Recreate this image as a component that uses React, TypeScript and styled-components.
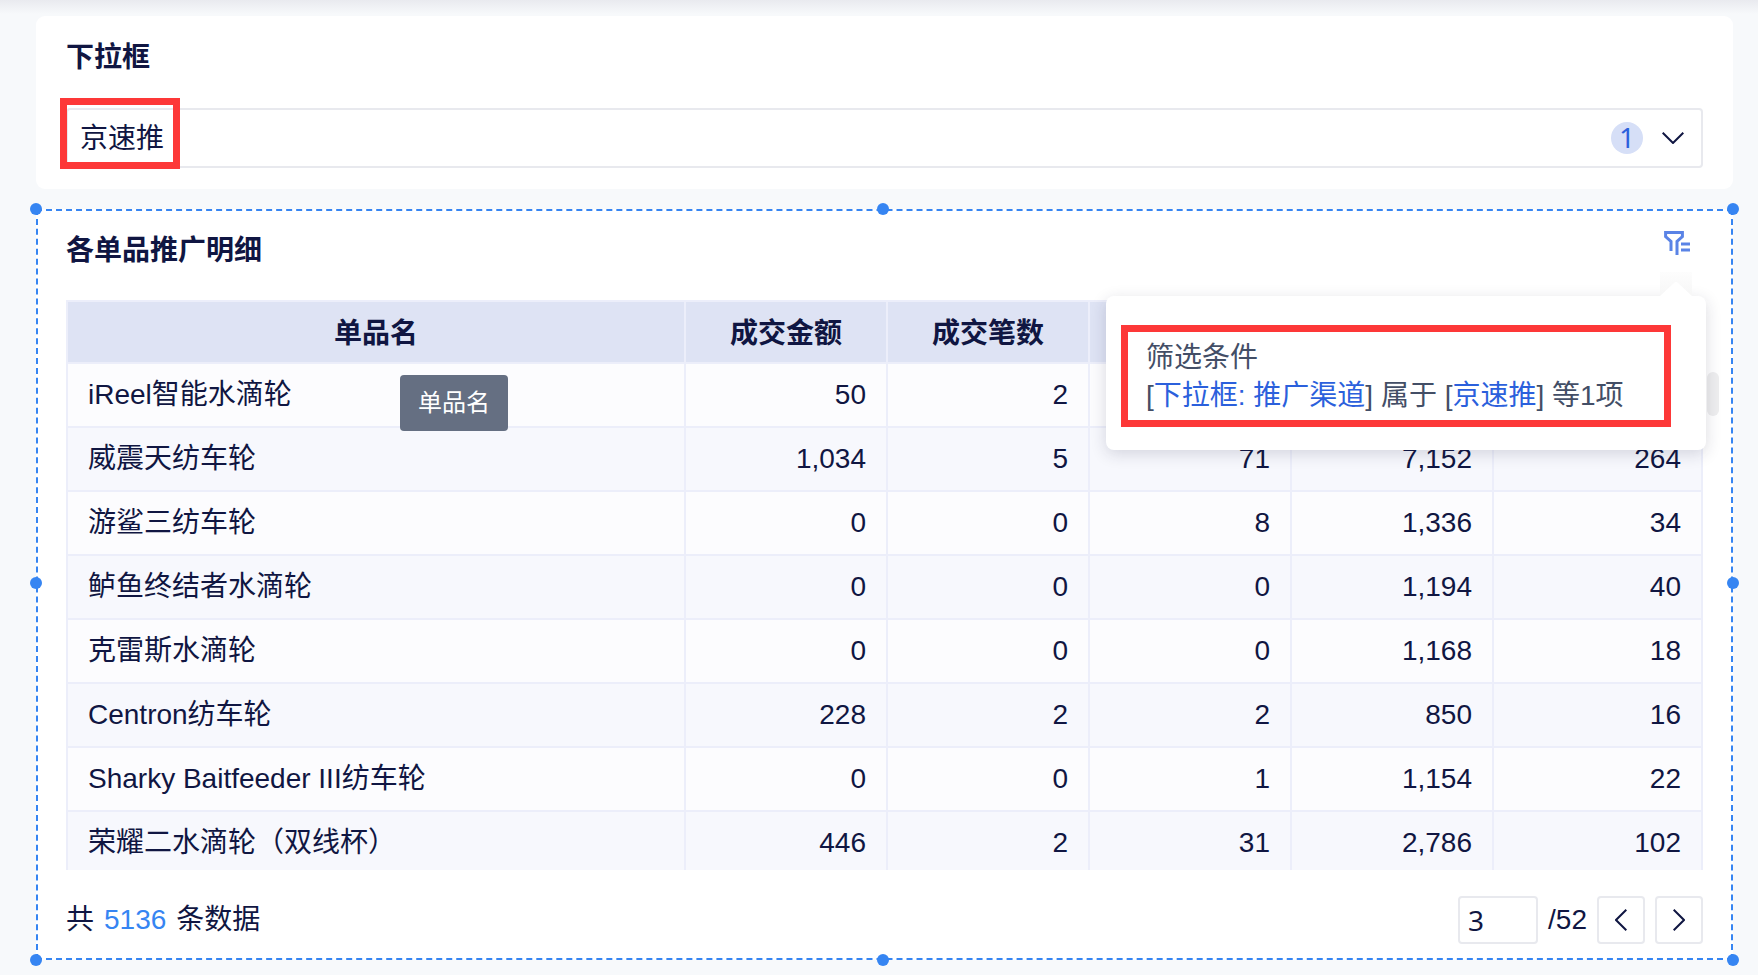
import React from "react";
import styled, { createGlobalStyle } from "styled-components";

const latin = `"Liberation Sans", "Noto Sans CJK SC", sans-serif`;
const humanist = `"Noto Sans", "Noto Sans CJK SC", sans-serif`;
const ink = "#101642";
const blue = "#3685f2";
const line = "#e8e9ee";

const GlobalStyle = createGlobalStyle`
  * { box-sizing: border-box; }
  body {
    margin: 0;
    background: #f7f9fb;
    color: ${ink};
    font: 28px/40px ${latin};
  }
  button, input, select { font: inherit; color: inherit; }
`;

const Page = styled.main`
  display: flex;
  flex-direction: column;
  gap: 20px;
  padding: 16px 25px 15px 36px;
  background: linear-gradient(#e9eaef, #f7f9fb 14px);
`;

const FilterCard = styled.section`
  padding: 20px 30px 21px;
  border-radius: 9px;
  background: #fff;
`;

const Title = styled.h2`
  display: block;
  margin: 0;
  font-size: 28px;
  line-height: 44px;
  font-weight: 700;
`;

const SelectField = styled.div`
  position: relative;
  margin-top: 28px;
`;

const Select = styled.select`
  display: block;
  width: 100%;
  height: 60px;
  padding: 2px 92px 0 12px;
  border: 2px solid ${line};
  border-radius: 4px;
  background: #fff;
  appearance: none;
  outline: none;
`;

const SelectAdornment = styled.div`
  position: absolute;
  top: 14px;
  right: 19px;
  display: flex;
  align-items: center;
  gap: 19px;
  pointer-events: none;
`;

const CountBadge = styled.span`
  width: 32px;
  height: 32px;
  border-radius: 50%;
  background: #d6dff7;
  color: #2b60dc;
  font: 28px/30px ${humanist};
  text-align: center;
`;

const SelectMark = styled.div`
  position: absolute;
  top: -10px;
  left: -6px;
  width: 120px;
  height: 71px;
  border: 7px solid #fd3838;
  pointer-events: none;
`;

const TableCard = styled.section`
  position: relative;
  padding: 18px 28px 14px;
  border: 2px dashed ${blue};
  background: #fff;
`;

const Handle = styled.i<{ $x: string; $y: string }>`
  position: absolute;
  left: ${(p) => p.$x};
  top: ${(p) => p.$y};
  width: 12px;
  height: 12px;
  border-radius: 50%;
  background: ${blue};
`;

const CardHeader = styled.header`
  display: flex;
  justify-content: space-between;
  align-items: flex-start;
  margin-bottom: 27px;
`;

const FilterAnchor = styled.div`
  position: relative;
  margin-right: 13px;
`;

const FilterButton = styled.button`
  display: flex;
  align-items: center;
  height: 28px;
  padding: 0;
  border: 0;
  background: none;
`;

const Popover = styled.div`
  position: absolute;
  z-index: 2;
  top: 67px;
  right: -16px;
  width: 600px;
  padding: 29px 35px 23px 15px;
  border-radius: 8px;
  background: #fff;
  box-shadow: 0 4px 16px rgba(30, 34, 60, 0.16);
`;

const PopoverArrow = styled.svg`
  position: absolute;
  top: -24px;
  right: 14px;
  background: linear-gradient(#fdfdfd, #f6f6f6);
`;

const Condition = styled.div`
  padding: 7px 18px 5px;
  border: 7px solid #fd3838;
  color: #434e66;
  line-height: 38px;
  white-space: nowrap;
`;

const Term = styled.span`
  color: #2b60dc;
`;

const TableViewport = styled.div`
  position: relative;
  height: 570px;
  overflow: hidden;
`;

const Table = styled.table`
  width: 100%;
  border-collapse: collapse;
  table-layout: fixed;
`;

const HeadCell = styled.th<{ $width?: string }>`
  width: ${(p) => p.$width ?? "auto"};
  height: 62px;
  padding: 4px 20px 0;
  border: 2px solid #eceefa;
  background: #dee3f4;
  font-weight: 700;
`;

const Row = styled.tr`
  background: #fcfcfe;
  &:nth-child(even) { background: #f7f8fd; }
`;

const Cell = styled.td<{ $numeric?: boolean }>`
  height: 64px;
  padding: 0 20px;
  border: 2px solid #eceefa;
  text-align: ${(p) => (p.$numeric ? "right" : "left")};
  white-space: nowrap;
`;

const CellTooltip = styled.div`
  position: absolute;
  top: 75px;
  left: 334px;
  padding: 8px 18px;
  border-radius: 4px;
  background: #656f82;
  color: #fff;
  font-size: 24px;
`;

const ScrollThumb = styled.div`
  position: absolute;
  top: 161px;
  right: 12px;
  width: 12px;
  height: 44px;
  border-radius: 6px;
  background: #eeeeef;
`;

const Footer = styled.footer`
  display: flex;
  justify-content: space-between;
  align-items: center;
  margin-top: 26px;
`;

const Total = styled.span`
  display: flex;
  gap: 10px;
`;

const TotalCount = styled.span`
  color: ${blue};
`;

const Pager = styled.nav`
  display: flex;
  align-items: center;
  gap: 10px;
`;

const PageInput = styled.input`
  width: 80px;
  height: 48px;
  padding: 0 8px;
  border: 2px solid ${line};
  border-radius: 4px;
  background: #fff;
  font-family: ${humanist};
  outline: none;
`;

const PageButton = styled.button`
  display: flex;
  align-items: center;
  justify-content: center;
  width: 48px;
  height: 48px;
  padding: 0;
  border: 2px solid ${line};
  border-radius: 4px;
  background: #fff;
`;

const columns = [
  { label: "单品名", width: "618px" },
  { label: "成交金额", width: "202px" },
  { label: "成交笔数", width: "202px" },
  { label: "", width: "202px" },
  { label: "", width: "202px" },
  { label: "", width: undefined },
];

const rows: string[][] = [
  ["iReel智能水滴轮", "50", "2", "", "", ""],
  ["威震天纺车轮", "1,034", "5", "71", "7,152", "264"],
  ["游鲨三纺车轮", "0", "0", "8", "1,336", "34"],
  ["鲈鱼终结者水滴轮", "0", "0", "0", "1,194", "40"],
  ["克雷斯水滴轮", "0", "0", "0", "1,168", "18"],
  ["Centron纺车轮", "228", "2", "2", "850", "16"],
  ["Sharky Baitfeeder III纺车轮", "0", "0", "1", "1,154", "22"],
  ["荣耀二水滴轮（双线杯）", "446", "2", "31", "2,786", "102"],
];

const handles: [string, string][] = [
  ["-8px", "-8px"],
  ["calc(50% - 8px)", "-8px"],
  ["calc(100% - 4px)", "-8px"],
  ["-8px", "calc(50% - 8px)"],
  ["calc(100% - 4px)", "calc(50% - 8px)"],
  ["-8px", "calc(100% - 4px)"],
  ["calc(50% - 8px)", "calc(100% - 4px)"],
  ["calc(100% - 4px)", "calc(100% - 4px)"],
];

const Chevron = ({ d, w, h }: { d: string; w: number; h: number }) => (
  <svg width={w} height={h} viewBox={`0 0 ${w} ${h}`} fill="none" stroke={ink} strokeWidth="2" aria-hidden="true">
    <path d={d} />
  </svg>
);

export default function App() {
  return (
    <>
      <GlobalStyle />
      <Page>
        <FilterCard>
          <Title as="label" htmlFor="channel">下拉框</Title>
          <SelectField>
            <Select id="channel" defaultValue="京速推">
              <option>京速推</option>
            </Select>
            <SelectAdornment>
              <CountBadge>1</CountBadge>
              <Chevron w={22} h={12} d="M0.7 0.7L11 11L21.3 0.7" />
            </SelectAdornment>
            <SelectMark />
          </SelectField>
        </FilterCard>

        <TableCard>
          <CardHeader>
            <Title>各单品推广明细</Title>
            <FilterAnchor>
              <FilterButton type="button" aria-label="筛选条件">
                <svg width="26" height="24" viewBox="0 0 26 24" fill="none" stroke="#5a83e6" strokeWidth="3" aria-hidden="true">
                  <path d="M7 20V10.5L1.6 5.5V1.6H18.4V5.5L13 10.5V24M17 13h9M17 19h9" />
                </svg>
              </FilterButton>
              <Popover role="tooltip">
                <PopoverArrow width="32" height="24" viewBox="0 0 32 24" aria-hidden="true">
                  <path d="M0 24 14 11q2-2 4 0l14 13z" fill="#fff" />
                </PopoverArrow>
                <Condition>
                  <div>筛选条件</div>
                  <div>
                    [<Term>下拉框: 推广渠道</Term>] 属于 [<Term>京速推</Term>] 等1项
                  </div>
                </Condition>
              </Popover>
            </FilterAnchor>
          </CardHeader>

          <TableViewport>
            <Table>
              <thead>
                <tr>
                  {columns.map((c, i) => (
                    <HeadCell key={i} $width={c.width}>{c.label}</HeadCell>
                  ))}
                </tr>
              </thead>
              <tbody>
                {rows.map((r) => (
                  <Row key={r[0]}>
                    {r.map((value, i) => (
                      <Cell key={i} $numeric={i > 0}>{value}</Cell>
                    ))}
                  </Row>
                ))}
              </tbody>
            </Table>
            <CellTooltip role="tooltip">单品名</CellTooltip>
          </TableViewport>
          <ScrollThumb />

          <Footer>
            <Total>
              共<TotalCount>5136</TotalCount>条数据
            </Total>
            <Pager aria-label="分页">
              <PageInput aria-label="页码" defaultValue="3" />
              <span>/52</span>
              <PageButton type="button" aria-label="上一页">
                <Chevron w={12} h={22} d="M11.3 0.7L1 11L11.3 21.3" />
              </PageButton>
              <PageButton type="button" aria-label="下一页">
                <Chevron w={12} h={22} d="M0.7 0.7L11 11L0.7 21.3" />
              </PageButton>
            </Pager>
          </Footer>
          {handles.map(([x, y], i) => (
            <Handle key={i} $x={x} $y={y} />
          ))}
        </TableCard>
      </Page>
    </>
  );
}
